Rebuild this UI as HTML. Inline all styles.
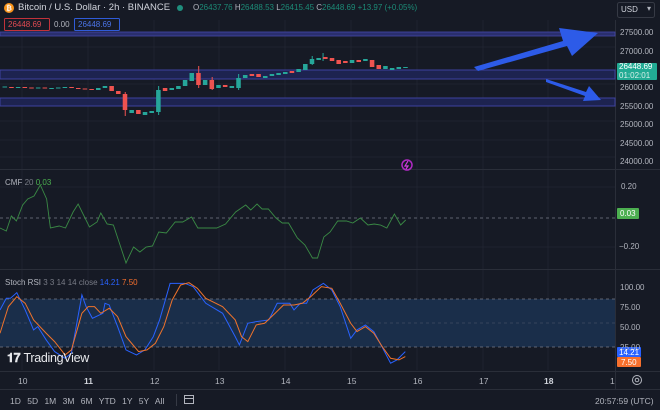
<!DOCTYPE html>
<html><head><meta charset="utf-8"><style>
html,body{margin:0;padding:0;background:#161a25;}
body{width:660px;height:410px;overflow:hidden;position:relative;font-family:"Liberation Sans",sans-serif;}
.t{position:absolute;white-space:nowrap;}
</style></head><body>
<svg width="660" height="410" style="position:absolute;left:0;top:0" font-family="Liberation Sans, sans-serif">
<rect width="660" height="410" fill="#161a25"/>
<!-- grid -->
<g stroke="#1f2330" stroke-width="1">
<line x1="22" y1="20" x2="22" y2="370"/><line x1="88" y1="20" x2="88" y2="370"/><line x1="154" y1="20" x2="154" y2="370"/><line x1="219" y1="20" x2="219" y2="370"/><line x1="285" y1="20" x2="285" y2="370"/><line x1="351" y1="20" x2="351" y2="370"/><line x1="417" y1="20" x2="417" y2="370"/><line x1="483" y1="20" x2="483" y2="370"/><line x1="548" y1="20" x2="548" y2="370"/>
<line x1="0" y1="47" x2="615" y2="47"/><line x1="0" y1="84" x2="615" y2="84"/><line x1="0" y1="121" x2="615" y2="121"/><line x1="0" y1="140" x2="615" y2="140"/><line x1="0" y1="157" x2="615" y2="157"/>
<line x1="0" y1="187" x2="615" y2="187"/><line x1="0" y1="247" x2="615" y2="247"/>
</g>
<!-- pane separators -->
<line x1="0" y1="169.5" x2="660" y2="169.5" stroke="#2a2e39"/>
<line x1="0" y1="269.5" x2="660" y2="269.5" stroke="#2a2e39"/>
<line x1="0" y1="371.5" x2="660" y2="371.5" stroke="#2a2e39"/>
<line x1="0" y1="389.5" x2="660" y2="389.5" stroke="#2a2e39"/>
<line x1="615.5" y1="20" x2="615.5" y2="389" stroke="#2a2e39"/>
<!-- bands -->
<rect x="0" y="32" width="615" height="4" fill="#2a2f6e" stroke="#4446a8" stroke-width="0.8"/>
<rect x="0" y="70" width="615" height="9" fill="#1d2350" stroke="#3d41a0" stroke-width="1"/>
<rect x="0" y="98" width="615" height="8" fill="#1d2350" stroke="#3d41a0" stroke-width="1"/>
<!-- candles -->
<g transform="scale(1.26,1)">
<g fill="#26a69a">
<rect x="2" y="86.5" width="3.6" height="1"/><rect x="12.6" y="87" width="3.6" height="1"/><rect x="28.5" y="87.5" width="3.6" height="1"/><rect x="39.1" y="88" width="3.6" height="1"/><rect x="44.4" y="87.5" width="3.6" height="1"/><rect x="49.7" y="87" width="3.6" height="1"/>
<rect x="76.2" y="88" width="3.6" height="2"/><rect x="81.5" y="86" width="3.6" height="2"/>
<rect x="102.7" y="110" width="3.6" height="3"/><rect x="113.3" y="112" width="3.6" height="3"/><rect x="118.6" y="111" width="3.6" height="2"/><rect x="123.9" y="90" width="3.6" height="22"/>
<rect x="134.5" y="88" width="3.6" height="2"/><rect x="139.8" y="86" width="3.6" height="3"/><rect x="145.1" y="80" width="3.6" height="6"/><rect x="150.4" y="73" width="3.6" height="8"/>
<rect x="161" y="80" width="3.6" height="5"/><rect x="171.6" y="85" width="3.6" height="3"/><rect x="182.2" y="86" width="3.6" height="2"/><rect x="187.5" y="78" width="3.6" height="10"/><rect x="192.8" y="75" width="3.6" height="3"/>
<rect x="208.7" y="76" width="3.6" height="2"/><rect x="214" y="74" width="3.6" height="2"/><rect x="219.3" y="73" width="3.6" height="2"/><rect x="224.6" y="72" width="3.6" height="2"/><rect x="235.2" y="69" width="3.6" height="3"/><rect x="240.5" y="64" width="3.6" height="6"/><rect x="245.8" y="59" width="3.6" height="5"/><rect x="251.1" y="58" width="3.6" height="2"/>
<rect x="277.6" y="60" width="3.6" height="3"/><rect x="288.2" y="59" width="3.6" height="2"/><rect x="304.1" y="66" width="3.6" height="3"/><rect x="309.4" y="68" width="3.6" height="2"/><rect x="314.7" y="67" width="3.6" height="2"/><rect x="320" y="67" width="3.6" height="1"/>
<rect x="125.5" y="86" width="0.8" height="29"/><rect x="189" y="74" width="0.8" height="16"/><rect x="247.4" y="56" width="0.8" height="9"/><rect x="256" y="53" width="0.8" height="8"/>
</g>
<g fill="#ef5350">
<rect x="7.3" y="87" width="3.6" height="1"/><rect x="17.9" y="87" width="3.6" height="1"/><rect x="23.2" y="87.5" width="3.6" height="1"/><rect x="33.8" y="87.5" width="3.6" height="1"/><rect x="55" y="87" width="3.6" height="1"/><rect x="60.3" y="88" width="3.6" height="1"/><rect x="65.6" y="88.5" width="3.6" height="1"/><rect x="70.9" y="89" width="3.6" height="1"/>
<rect x="86.8" y="86" width="3.6" height="5"/><rect x="92.1" y="91" width="3.6" height="3"/><rect x="97.4" y="94" width="3.6" height="16"/><rect x="108" y="110" width="3.6" height="4"/>
<rect x="129.2" y="88" width="3.6" height="3"/><rect x="155.7" y="73" width="3.6" height="12"/><rect x="166.3" y="80" width="3.6" height="9"/><rect x="176.9" y="85" width="3.6" height="2"/>
<rect x="198.1" y="74" width="3.6" height="2"/><rect x="203.4" y="74" width="3.6" height="3"/><rect x="229.9" y="71" width="3.6" height="2"/>
<rect x="256.4" y="57" width="3.6" height="2"/><rect x="261.7" y="58" width="3.6" height="3"/><rect x="267" y="60" width="3.6" height="4"/><rect x="272.3" y="61" width="3.6" height="2"/><rect x="282.9" y="60" width="3.6" height="2"/><rect x="293.5" y="60" width="3.6" height="7"/><rect x="298.8" y="65" width="3.6" height="4"/>
<rect x="99" y="92" width="0.8" height="24"/><rect x="157.3" y="66" width="0.8" height="22"/><rect x="168" y="77" width="0.8" height="13"/>
</g>
</g>
<!-- arrows -->
<polygon points="474,67 563,41 559,28 598,33 572,56 567,46 478,71" fill="#2d5be8"/>
<polygon points="546,79 586,92 589,86 601,100 583,101 585,96 546,82" fill="#2d5be8"/>
<!-- purple icon -->
<circle cx="407" cy="165" r="5" fill="none" stroke="#b02ac4" stroke-width="1.5"/>
<path d="M408 161 L405 166 L408 166 L406 169" stroke="#d23ee0" stroke-width="1.2" fill="none"/>
<!-- CMF -->
<line x1="0" y1="218" x2="615" y2="218" stroke="#787b86" stroke-dasharray="3,3" stroke-width="0.8"/>
<polyline transform="scale(1.26,1)" fill="none" stroke="#3a8a45" stroke-width="0.9" vector-effect="non-scaling-stroke" points="0,228 5,231 9,216 13,221 18,205 22,199 27,196 32,185 37,199 40,228 47,226 52,228 58,212 62,204 71,227 77,222 80,213 85,224 90,225 100,263 106,247 111,252 116,247 121,246 126,232 132,233 139,222 145,222 152,217 157,228 165,228 172,228 179,224 187,212 195,205 199,210 204,204 208,209 213,209 219,218 224,223 229,223 236,238 242,245 248,258 252,258 257,237 262,232 268,221 275,221 280,223 286,218 292,225 297,224 302,225 307,228 313,214 318,225 322,220"/>
<!-- Stoch -->
<rect x="0" y="299" width="615" height="48" fill="#1a2e4a"/>
<line x1="0" y1="299" x2="615" y2="299" stroke="#787b86" stroke-dasharray="3,3" stroke-width="0.8"/>
<line x1="0" y1="323" x2="615" y2="323" stroke="#787b86" stroke-dasharray="3,3" stroke-width="0.6" opacity="0.6"/>
<line x1="0" y1="347" x2="615" y2="347" stroke="#787b86" stroke-dasharray="3,3" stroke-width="0.8"/>
<g transform="translate(0,270) scale(0.42,0.333)" fill="none" stroke-width="1" >
<polyline vector-effect="non-scaling-stroke" stroke="#2962ff" points="0,120 15,85 25,85 40,68 60,120 80,180 90,170 110,210 130,245 155,265 170,250 195,75 205,110 220,145 245,130 250,100 260,105 280,170 300,240 325,255 345,240 365,200 380,150 405,40 440,40 460,50 490,100 530,130 560,200 570,225 590,160 610,155 640,150 660,100 690,100 700,120 715,100 730,100 745,60 770,40 790,60 810,110 835,205 850,180 870,165 890,185 905,220 930,280 945,270 965,245"/>
<polyline vector-effect="non-scaling-stroke" stroke="#f0732b" points="0,190 20,110 40,80 60,100 80,150 110,190 130,215 155,255 170,240 195,130 210,110 225,110 240,130 260,115 280,140 300,200 330,245 350,240 370,220 390,170 410,90 430,45 450,38 470,55 490,85 530,110 560,150 575,200 590,215 610,165 630,160 655,130 675,105 700,105 720,100 740,80 765,50 790,55 810,100 835,160 850,185 870,170 890,190 910,230 930,265 950,270 965,260"/>
</g>
<!-- header icons -->
<circle cx="9" cy="8" r="5" fill="#f7931a"/>
<text x="9" y="10.5" font-size="7" fill="#fff" text-anchor="middle" font-weight="bold">₿</text>
<circle cx="180" cy="8" r="3" fill="#22ab94" opacity="0.8"/>
<!-- USD -->
<rect x="617.5" y="2.5" width="37" height="15" rx="2" fill="#161a25" stroke="#363a45"/>
<!-- right labels -->
<rect x="617" y="63" width="40" height="17" rx="1" fill="#22ab94"/>
<rect x="617" y="208" width="22" height="11" rx="1" fill="#4caf50"/>
<rect x="617" y="347" width="24" height="10" rx="1" fill="#2962ff"/>
<rect x="617" y="357" width="24" height="10" rx="1" fill="#f7702d"/>
<!-- settings icon -->
<circle cx="637" cy="380" r="4.5" fill="none" stroke="#b2b5be" stroke-width="1"/>
<circle cx="637" cy="380" r="1.8" fill="none" stroke="#b2b5be" stroke-width="1"/>
<!-- calendar icon -->
<rect x="184.5" y="395.5" width="9" height="8" fill="none" stroke="#b2b5be"/>
<line x1="184" y1="398.5" x2="194" y2="398.5" stroke="#b2b5be"/>
<line x1="176.5" y1="394" x2="176.5" y2="406" stroke="#363a45"/>
<!-- header boxes -->
<rect x="4.5" y="18.5" width="45" height="12" rx="1" fill="none" stroke="#c2323a"/>
<rect x="74.5" y="18.5" width="45" height="12" rx="1" fill="none" stroke="#2f5bd8"/>
</svg>
<div class="t" style="left:18px;top:2px;font-size:9.5px;color:#d1d4dc">Bitcoin / U.S. Dollar · 2h · BINANCE</div>
<div class="t" style="left:193px;top:3px;font-size:8px;color:#1c8a76"><span style="color:#b2b5be">O</span>26437.76 <span style="color:#b2b5be">H</span>26488.53 <span style="color:#b2b5be">L</span>26415.45 <span style="color:#b2b5be">C</span>26448.69 +13.97 (+0.05%)</div>
<div class="t" style="left:8px;top:20px;font-size:8px;color:#e04a52">26448.69</div>
<div class="t" style="left:54px;top:20px;font-size:8px;color:#b2b5be">0.00</div>
<div class="t" style="left:78px;top:20px;font-size:8px;color:#4b74e8">26448.69</div>
<div class="t" style="left:621px;top:5px;font-size:8px;color:#d1d4dc">USD</div>
<div class="t" style="left:647px;top:4px;font-size:8px;color:#b2b5be">▾</div>
<div class="t" style="left:620px;top:24px;font-size:8px;color:#b2b5be;line-height:18.5px">27500.00<br>27000.00</div>
<div class="t" style="left:620px;top:79px;font-size:8px;color:#b2b5be;line-height:18.5px">26000.00<br>25500.00<br>25000.00<br>24500.00<br>24000.00</div>
<div class="t" style="left:619px;top:63px;font-size:8px;color:#fff;line-height:8.5px">26448.69<br><span style="color:#d8f0ea">01:02:01</span></div>
<div class="t" style="left:621px;top:182px;font-size:8px;color:#b2b5be">0.20</div>
<div class="t" style="left:619px;top:242px;font-size:8px;color:#b2b5be">−0.20</div>
<div class="t" style="left:620px;top:209px;font-size:8px;color:#fff">0.03</div>
<div class="t" style="left:620px;top:278px;font-size:8px;color:#b2b5be;line-height:20px">100.00<br>75.00<br>50.00<br>25.00</div>
<div class="t" style="left:619px;top:348px;font-size:8px;color:#fff">14.21</div>
<div class="t" style="left:621px;top:358px;font-size:8px;color:#fff">7.50</div>
<div class="t" style="left:5px;top:178px;font-size:8px;color:#b2b5be">CMF <span style="color:#787b86">20</span> <span style="color:#4caf50">0.03</span></div>
<div class="t" style="left:5px;top:278px;font-size:8px;color:#b2b5be">Stoch RSI <span style="color:#787b86">3 3 14 14 close</span> <span style="color:#2962ff">14.21</span> <span style="color:#f7702d">7.50</span></div>
<div class="t" style="left:7px;top:351px;font-size:12.5px;color:#e8e9ed;font-weight:bold;letter-spacing:-0.3px">𝟏𝟕 <span style="font-weight:normal">TradingView</span></div>
<div class="t" style="top:376px;left:0;width:660px;font-size:8.5px;color:#b2b5be">
<span class="t" style="left:18px">10</span><span class="t" style="left:84px;font-weight:bold;color:#d1d4dc">11</span><span class="t" style="left:150px">12</span><span class="t" style="left:215px">13</span><span class="t" style="left:281px">14</span><span class="t" style="left:347px">15</span><span class="t" style="left:413px">16</span><span class="t" style="left:479px">17</span><span class="t" style="left:544px;font-weight:bold;color:#d1d4dc">18</span><span class="t" style="left:610px">1</span></div>
<div class="t" style="left:10px;top:396px;font-size:8.5px;color:#b2b5be;word-spacing:4px">1D 5D 1M 3M 6M YTD 1Y 5Y All</div>
<div class="t" style="left:595px;top:396px;font-size:8.5px;color:#b2b5be">20:57:59 (UTC)</div>
</body></html>
